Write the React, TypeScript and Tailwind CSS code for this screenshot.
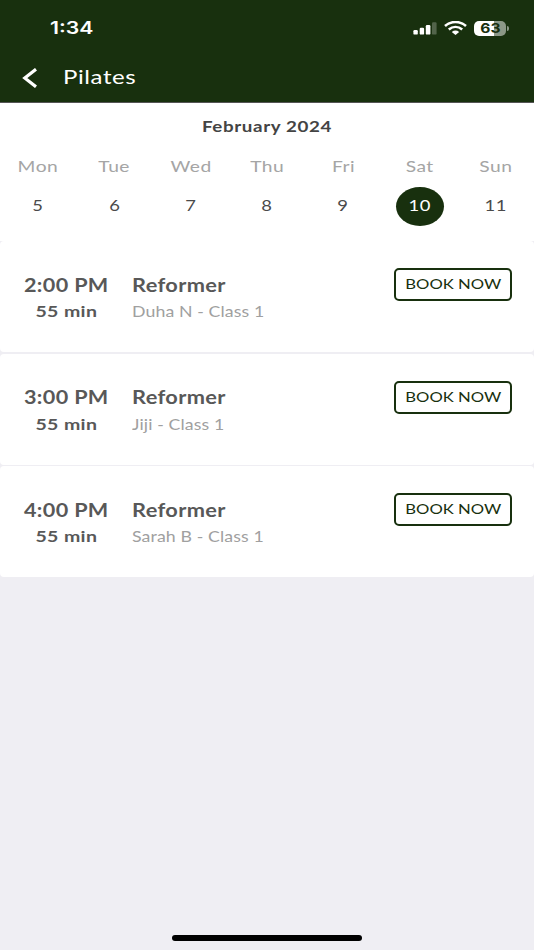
// Class schedule screen for the studio app.
const days = [
  { name: "Mon", date: 5 },
  { name: "Tue", date: 6 },
  { name: "Wed", date: 7 },
  { name: "Thu", date: 8 },
  { name: "Fri", date: 9 },
  { name: "Sat", date: 10, selected: true },
  { name: "Sun", date: 11 },
];

const classes = [
  { time: "2:00 PM", title: "Reformer", detail: "Duha N - Class 1" },
  { time: "3:00 PM", title: "Reformer", detail: "Jiji - Class 1" },
  { time: "4:00 PM", title: "Reformer", detail: "Sarah B - Class 1" },
];

function StatusBar() {
  return (
    <div className="flex h-14 items-center justify-between pl-[50px] pr-[25px]">
      <span className="inline-block origin-left scale-x-[1.25] font-['Inter',sans-serif] text-[17px] font-semibold leading-6">
        1:34
      </span>
      <div className="flex items-center">
        <svg width="24" height="14" viewBox="0 0 24 14" fill="currentColor">
          <rect x="0.4" y="9" width="4.4" height="4.6" rx="1.2" />
          <rect x="6.7" y="6.8" width="4.4" height="6.8" rx="1.2" />
          <rect x="12.8" y="4" width="4.6" height="9.6" rx="1.2" />
          <rect x="19" y="1.2" width="4.6" height="12.4" rx="1.2" opacity="0.25" />
        </svg>
        <svg className="ml-[7px]" width="23" height="14" viewBox="0 0 23 14" fill="none" stroke="currentColor" strokeWidth="2.6">
          <path d="M1 5C7-.3 16-.3 22 5" />
          <path d="M4.8 8.6C8.8 5.2 14.2 5.2 18.2 8.6" />
          <path d="M7.8 10.9Q11.5 8.1 15.2 10.9L11.5 14Z" fill="currentColor" stroke="none" />
        </svg>
        <div className="ml-[7px] flex h-[15px] w-8 items-center justify-center rounded-[5px] bg-[linear-gradient(90deg,#fff_63%,#8c9887_63%)]">
          <span className="inline-block scale-x-[1.2] font-['Inter',sans-serif] text-[13px] font-bold leading-none text-[#18300e]">
            63
          </span>
        </div>
        <span className="ml-px h-[5px] w-[2px] rounded-r bg-[#8c9887]" />
      </div>
    </div>
  );
}

export default function App() {
  return (
    <main className="flex h-[950px] w-[534px] flex-col overflow-hidden bg-[#efeef3] font-['Lato',sans-serif]">
      <header className="h-[103px] shrink-0 border-b border-[#555] bg-[#18300e] text-white">
        <StatusBar />
        <div className="flex h-[42px] items-center pl-[22px]">
          <svg className="mt-px" width="16" height="20" viewBox="0 0 16 20" fill="none" stroke="currentColor" strokeWidth="3.2">
            <path d="M14 1.2 2.8 10 14 18.8" />
          </svg>
          <h1 className="ml-[25px] origin-left scale-x-[1.2] pb-0.5 text-[20px] leading-6 tracking-[0.5px]">
            Pilates
          </h1>
        </div>
      </header>

      <section className="h-[138px] shrink-0 bg-white pt-[13px] text-center">
        <h2 className="scale-x-[1.25] text-[15px] font-bold leading-5 tracking-[0.5px] text-[#444]">
          February 2024
        </h2>
        <div className="mt-[20px] grid grid-cols-7">
          {days.map((day) => (
            <div key={day.name} className="flex flex-col items-center">
              <span className="scale-x-[1.2] text-[16px] leading-5 tracking-[0.4px] text-[#a5a5a5]">
                {day.name}
              </span>
              <span
                className={
                  day.selected
                    ? "mt-[11px] flex h-[39px] w-12 justify-center rounded-[50%] bg-[#18300e] pt-[8px] text-white"
                    : "mt-[11px] flex h-[39px] w-12 justify-center pt-[8px] text-[#4a4a4a]"
                }
              >
                <span className="scale-x-[1.15] text-[16px] leading-5 tracking-[0.5px]">
                  {day.date}
                </span>
              </span>
            </div>
          ))}
        </div>
      </section>

      <ul className="flex flex-col gap-[1.5px]">
        {classes.map((item) => (
          <li
            key={item.time}
            className="flex h-[111px] items-start rounded-[4px] bg-white pr-[22px] pt-[27px]"
          >
            <div className="flex w-[132px] flex-col items-center pt-[4.5px] font-bold text-[#585858]">
              <span className="scale-x-[1.2] whitespace-nowrap text-[18px] leading-6 tracking-[0.3px]">
                {item.time}
              </span>
              <span className="mt-[2.5px] scale-x-[1.22] whitespace-nowrap text-[16px] leading-6 tracking-[0.3px]">
                55 min
              </span>
            </div>
            <div className="flex flex-1 flex-col items-start pt-[4.5px]">
              <span className="origin-left scale-x-[1.21] whitespace-nowrap text-[18px] font-bold leading-6 tracking-[0.3px] text-[#585858]">
                {item.title}
              </span>
              <span className="mt-[2.5px] origin-left scale-x-[1.18] whitespace-nowrap text-[15px] leading-6 tracking-[0.1px] text-[#a0a0a0]">
                {item.detail}
              </span>
            </div>
            <button className="flex h-[33px] w-[118px] items-center justify-center rounded-[5px] border-2 border-[#18300e] pb-px text-[#18300e]">
              <span className="scale-x-[1.19] whitespace-nowrap text-[14px] leading-5">
                BOOK NOW
              </span>
            </button>
          </li>
        ))}
      </ul>

      <div className="mx-auto mb-[9px] mt-auto h-[6px] w-[190px] rounded-full bg-black" />
    </main>
  );
}
